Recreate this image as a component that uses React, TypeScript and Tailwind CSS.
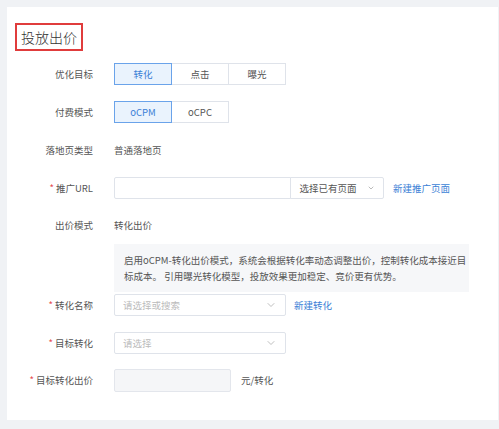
import React from 'react';
import { ChevronDown } from 'lucide-react';

const font = { fontFamily: '"Noto Sans CJK SC", "Noto Sans", sans-serif' };

function Label({ text, required = false }: { text: string; required?: boolean }) {
  return (
    <div className="w-[86px] shrink-0 text-right text-[9.5px] text-[#555]">
      {required && <span className="mr-[2px] text-[#e5484d]">*</span>}
      {text}
    </div>
  );
}

function Segmented({ options, active }: { options: string[]; active: number }) {
  return (
    <div className="flex">
      {options.map((opt, i) => (
        <div
          key={opt}
          className={
            'flex h-[22px] w-[58px] items-center justify-center border text-[9.5px] ' +
            (i === active
              ? 'z-10 border-[#6aa3ea] bg-[#eaf3fd] text-[#3b7fd6]'
              : 'border-[#dfe3ea] bg-white text-[#555]') +
            (i > 0 ? ' -ml-px' : '')
          }
        >
          {opt}
        </div>
      ))}
    </div>
  );
}

function SelectBox({ placeholder }: { placeholder: string }) {
  return (
    <div className="flex h-[22px] w-[172px] items-center justify-between rounded-[2px] border border-[#dfe3ea] bg-white pl-[8px] pr-[8px]">
      <span className="text-[9.5px] text-[#bbb]">{placeholder}</span>
      <ChevronDown className="h-[12px] w-[12px] text-[#aaa]" strokeWidth={1.5} />
    </div>
  );
}

export default function App() {
  return (
    <div className="h-[429px] w-[499px] bg-[#f0f2f5] pl-[7px] pr-[1px] pt-[7px]" style={font}>
      <div className="h-[413px] bg-white pt-[16px]">
        <div className="ml-[8px] flex h-[28px] w-[68px] items-center justify-center border-2 border-[#e03c3c] text-[14px] font-light text-[#333]">
          投放出价
        </div>

        <div className="mt-[12px] flex flex-col">
          <div className="flex h-[22px] items-center gap-[21px]">
            <Label text="优化目标" />
            <Segmented options={['转化', '点击', '曝光']} active={0} />
          </div>

          <div className="mt-[16px] flex h-[22px] items-center gap-[21px]">
            <Label text="付费模式" />
            <Segmented options={['oCPM', 'oCPC']} active={0} />
          </div>

          <div className="mt-[16px] flex h-[22px] items-center gap-[21px]">
            <Label text="落地页类型" />
            <span className="text-[9.5px] text-[#555]">普通落地页</span>
          </div>

          <div className="mt-[16px] flex h-[22px] items-center gap-[21px]">
            <Label text="推广URL" required />
            <div className="flex items-center">
              <div className="h-[22px] w-[177px] rounded-l-[2px] border border-[#dfe3ea] bg-white" />
              <div className="-ml-px flex h-[22px] w-[94px] items-center justify-center gap-[10px] rounded-r-[2px] border border-[#dfe3ea] bg-white text-[9.5px] text-[#555]">
                选择已有页面
                <ChevronDown className="h-[8px] w-[8px] text-[#999]" strokeWidth={2} />
              </div>
              <span className="ml-[9px] text-[9.5px] text-[#3b7fd6]">新建推广页面</span>
            </div>
          </div>

          <div className="mt-[15px] flex h-[22px] items-center gap-[21px]">
            <Label text="出价模式" />
            <span className="text-[9.5px] text-[#555]">转化出价</span>
          </div>

          <div className="mt-[8px] flex gap-[21px]">
            <div className="w-[86px] shrink-0" />
            <div className="w-[355px] bg-[#f6f7f9] pb-[8px] pl-[10px] pr-[2px] pt-[8px] text-[9.5px] leading-[16px] text-[#555]">
              启用oCPM-转化出价模式，系统会根据转化率动态调整出价，控制转化成本接近目标成本。 引用曝光转化模型，投放效果更加稳定、竞价更有优势。
            </div>
          </div>

          <div className="mt-[2px] flex h-[22px] items-center gap-[21px]">
            <Label text="转化名称" required />
            <SelectBox placeholder="请选择或搜索" />
            <span className="-ml-[13px] text-[9.5px] text-[#3b7fd6]">新建转化</span>
          </div>

          <div className="mt-[16px] flex h-[22px] items-center gap-[21px]">
            <Label text="目标转化" required />
            <SelectBox placeholder="请选择" />
          </div>

          <div className="mt-[15px] flex h-[23px] items-center gap-[21px]">
            <Label text="目标转化出价" required />
            <div className="flex items-center">
              <div className="h-[23px] w-[117px] rounded-[2px] border border-[#e3e6ec] bg-[#f5f6f8]" />
              <span className="ml-[10px] text-[9.5px] text-[#555]">元/转化</span>
            </div>
          </div>
        </div>
      </div>
    </div>
  );
}
